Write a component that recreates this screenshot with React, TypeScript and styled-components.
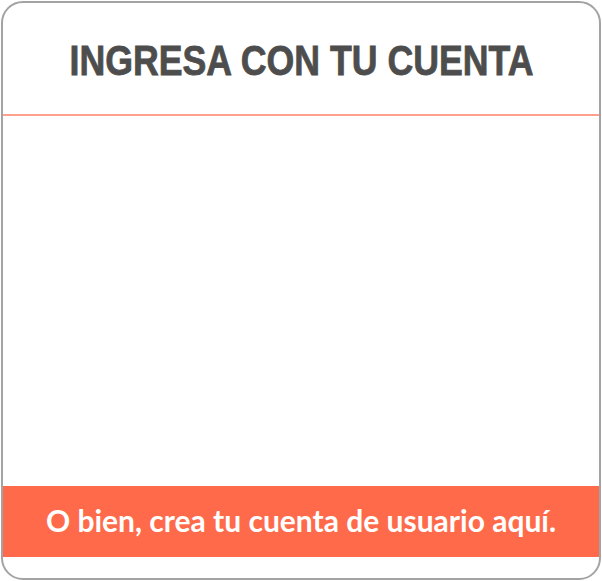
import React from 'react'
import styled, { createGlobalStyle } from 'styled-components'

const Global = createGlobalStyle`
  html, body {
    margin: 0;
    padding: 0;
    background: #ffffff;
  }
`

const Card = styled.div`
  box-sizing: border-box;
  width: 600px;
  height: 579px;
  margin: 1px;
  border: 2px solid #a3a3a3;
  border-radius: 22px;
  background: #ffffff;
  display: flex;
  flex-direction: column;
  overflow: hidden;
`

const Header = styled.header`
  height: 111px;
  display: flex;
  align-items: center;
  justify-content: center;
  border-bottom: 2px solid #ffa08c;
`

// no condensed face installed, so squeeze the bold sans horizontally
const Title = styled.h1`
  margin: 0;
  padding-top: 4px;
  font-family: "Liberation Sans", Arial, sans-serif;
  font-weight: 700;
  font-size: 43px;
  color: #4d4d4d;
  white-space: nowrap;
  -webkit-text-stroke: 0.8px #4d4d4d;
  transform: scaleX(0.83);
`

const Body = styled.div`
  flex: 1;
`

const SignupButton = styled.button`
  height: 71px;
  margin-bottom: 21px;
  border: none;
  background: #ff6a4a;
  color: #ffffff;
  font-family: Lato, "Open Sans", sans-serif;
  font-weight: 700;
  font-size: 30px;
  cursor: pointer;
  padding: 0 0 4px;
`

export default function App() {
  return (
    <>
      <Global />
      <Card>
        <Header>
          <Title>INGRESA CON TU CUENTA</Title>
        </Header>
        <Body />
        <SignupButton>O bien, crea tu cuenta de usuario aquí.</SignupButton>
      </Card>
    </>
  )
}
